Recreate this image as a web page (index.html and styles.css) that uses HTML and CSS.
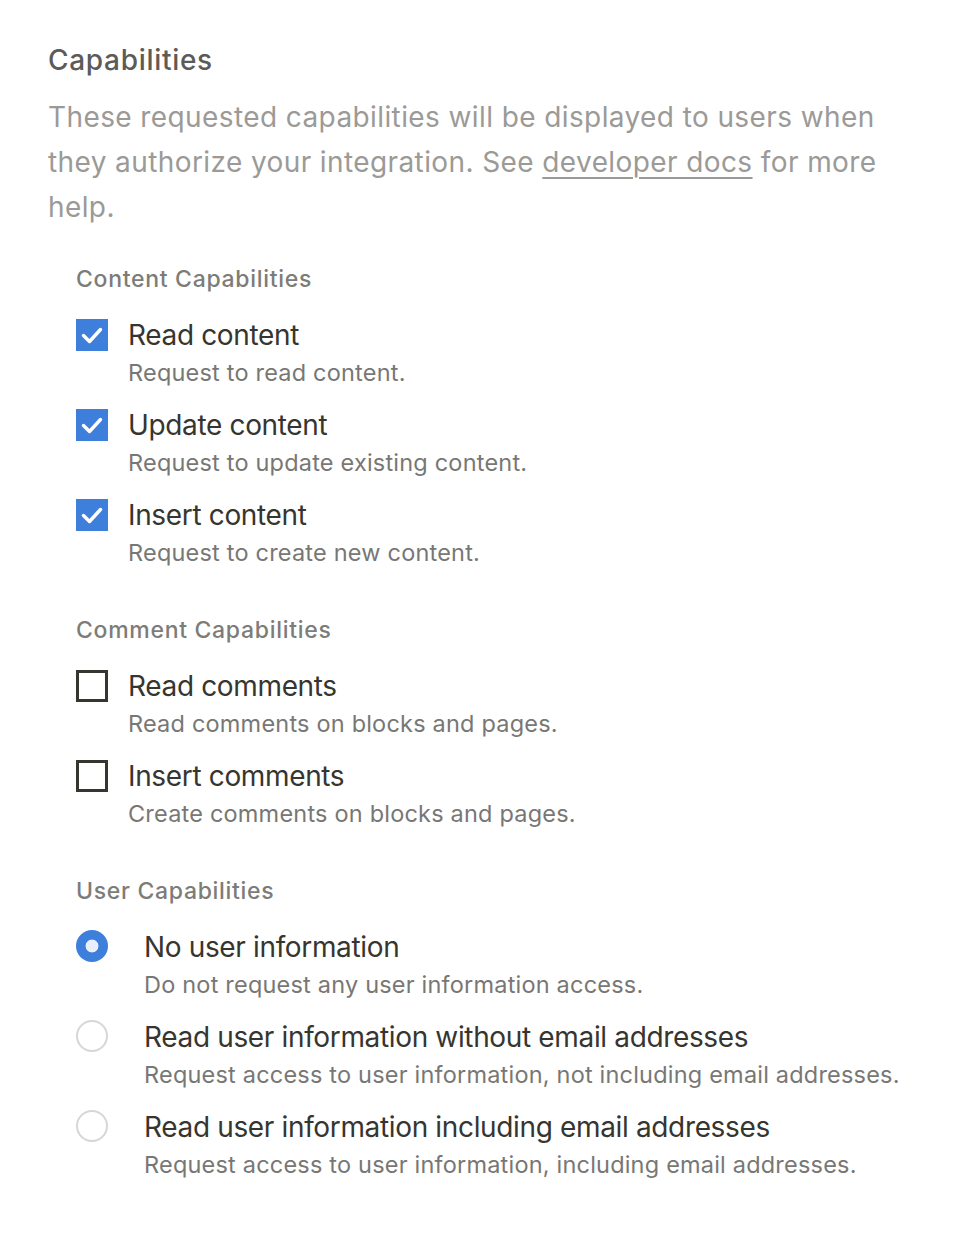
FILE: index.html
```html
<!DOCTYPE html>
<html>
<head>
<meta charset="utf-8">
<link rel="stylesheet" href="styles.css">
</head>
<body>
<div class="page">
  <h1 class="title">Capabilities</h1>
  <p class="desc">These requested capabilities will be displayed to users when they authorize your integration. See <a class="link" href="#">developer docs</a> for more help.</p>

  <section class="group">
    <h2 class="group-title">Content Capabilities</h2>
    <div class="rows">
      <div class="row">
        <span class="box checked"><svg viewBox="0 0 32 32" width="32" height="32"><path d="M7.5 16.5 L13.5 22.5 L24.5 10.5" fill="none" stroke="#fff" stroke-width="3.4" stroke-linecap="round" stroke-linejoin="round"/></svg></span>
        <div class="text"><div class="label">Read content</div><div class="sub">Request to read content.</div></div>
      </div>
      <div class="row">
        <span class="box checked"><svg viewBox="0 0 32 32" width="32" height="32"><path d="M7.5 16.5 L13.5 22.5 L24.5 10.5" fill="none" stroke="#fff" stroke-width="3.4" stroke-linecap="round" stroke-linejoin="round"/></svg></span>
        <div class="text"><div class="label">Update content</div><div class="sub">Request to update existing content.</div></div>
      </div>
      <div class="row">
        <span class="box checked"><svg viewBox="0 0 32 32" width="32" height="32"><path d="M7.5 16.5 L13.5 22.5 L24.5 10.5" fill="none" stroke="#fff" stroke-width="3.4" stroke-linecap="round" stroke-linejoin="round"/></svg></span>
        <div class="text"><div class="label">Insert content</div><div class="sub">Request to create new content.</div></div>
      </div>
    </div>
  </section>

  <section class="group">
    <h2 class="group-title">Comment Capabilities</h2>
    <div class="rows">
      <div class="row">
        <span class="box"></span>
        <div class="text"><div class="label">Read comments</div><div class="sub">Read comments on blocks and pages.</div></div>
      </div>
      <div class="row">
        <span class="box"></span>
        <div class="text"><div class="label">Insert comments</div><div class="sub">Create comments on blocks and pages.</div></div>
      </div>
    </div>
  </section>

  <section class="group">
    <h2 class="group-title">User Capabilities</h2>
    <div class="rows">
      <div class="row radio-row">
        <span class="radio on"></span>
        <div class="text"><div class="label">No user information</div><div class="sub">Do not request any user information access.</div></div>
      </div>
      <div class="row radio-row">
        <span class="radio"></span>
        <div class="text"><div class="label">Read user information without email addresses</div><div class="sub">Request access to user information, not including email addresses.</div></div>
      </div>
      <div class="row radio-row">
        <span class="radio"></span>
        <div class="text"><div class="label">Read user information including email addresses</div><div class="sub">Request access to user information, including email addresses.</div></div>
      </div>
    </div>
  </section>
</div>
</body>
</html>
```

FILE: styles.css
```css
* { box-sizing: border-box; }
html, body { margin: 0; padding: 0; background: #ffffff; }
body {
  font-family: Inter, "Noto Sans", "Liberation Sans", sans-serif;
  -webkit-font-smoothing: antialiased;
}
.page {
  padding: 42px 48px 0 48px;
}
.title {
  margin: 0;
  font-size: 28px;
  line-height: 36px;
  font-weight: 500;
  color: #5c5b58;
  letter-spacing: 0.7px;
}
.desc {
  margin: 17px 0 0 0;
  font-size: 28px;
  line-height: 45px;
  font-weight: 400;
  color: #9b9a97;
  max-width: 860px;
  letter-spacing: 0.4px;
}
.link {
  color: #9b9a97;
  text-decoration: underline;
  text-decoration-thickness: 2px;
  text-underline-offset: 5px;
}
.group {
  margin-left: 28px;
  margin-top: 34px;
}
.group + .group { margin-top: 43px; }
.group-title {
  margin: 0;
  font-size: 23px;
  line-height: 30px;
  font-weight: 500;
  color: #7d7c78;
  letter-spacing: 0.7px;
}
.rows {
  display: flex;
  flex-direction: column;
  gap: 14px;
  margin-top: 22px;
}
.row {
  display: flex;
  align-items: flex-start;
  gap: 20px;
}
.radio-row { gap: 36px; }
.box {
  flex: none;
  width: 32px;
  height: 32px;
  margin-top: 3px;
  border: 3px solid #37352f;
  display: flex;
  align-items: center;
  justify-content: center;
}
.box.checked {
  background: #3e7fdc;
  border: none;
}
.radio {
  flex: none;
  width: 32px;
  height: 32px;
  margin-top: 2px;
  border-radius: 50%;
  border: 2px solid #d6d6d4;
  background: #fff;
}
.radio.on {
  border: none;
  background: radial-gradient(circle, #e9f0fb 0 6px, #3e7fdc 6.8px);
}
.label {
  font-size: 28px;
  line-height: 38px;
  color: #37352f;
  font-weight: 400;
  letter-spacing: -0.35px;
}
.sub {
  font-size: 23.5px;
  line-height: 38px;
  color: #787774;
  font-weight: 400;
  letter-spacing: 0.2px;
}
```
